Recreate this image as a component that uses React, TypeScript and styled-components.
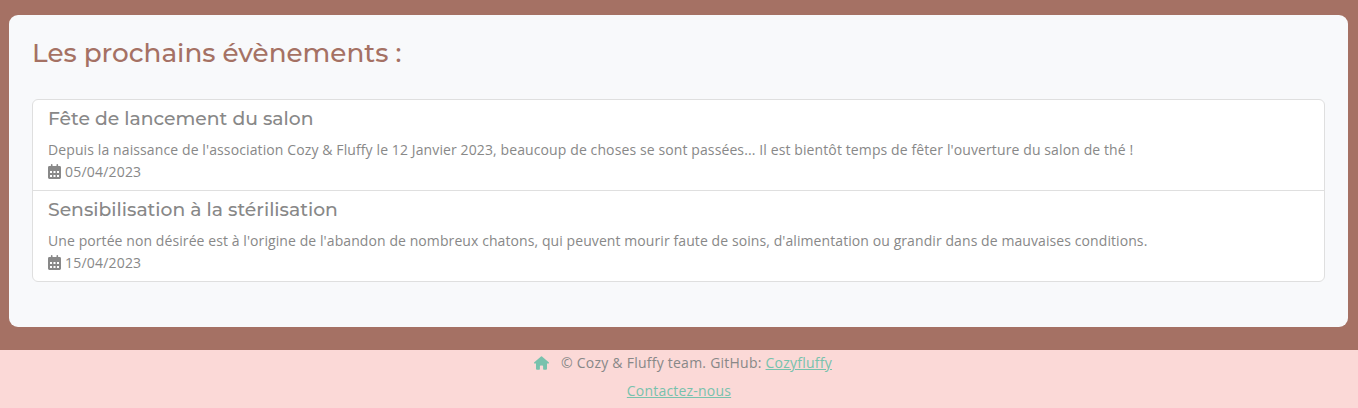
import React from 'react';
import styled, { createGlobalStyle } from 'styled-components';

const GlobalStyle = createGlobalStyle`
  * { box-sizing: border-box; }
  body {
    margin: 0;
    background: #a57164;
    color: #888;
    font-family: "Segoe UI", "Open Sans", "Noto Sans", sans-serif;
    font-size: 14px;
    line-height: 22px;
    overflow: hidden;
  }
`;

const Page = styled.div`
  display: flex;
  flex-direction: column;
  height: 408px;
`;

const Panel = styled.main`
  height: 312px;
  margin: 15px 10px 23px 9px;
  padding: 22px 23px;
  border-radius: 9px;
  background: #f8f9fb;
`;

const Title = styled.h1`
  margin: 0 0 29px;
  color: #a57164;
  font: 500 26.25px/33px Montserrat, sans-serif;
  white-space: nowrap;
`;

const EventList = styled.ul`
  list-style: none;
  margin: 0;
  padding: 0;
  border: 1px solid #dfdfdf;
  border-radius: 6px;
  background: #fff;
`;

const EventItem = styled.li`
  height: 90px;
  padding: 7px 15px;
  & + & {
    height: 91px;
    border-top: 1px solid #dfdfdf;
  }
`;

const EventName = styled.h2`
  margin: 0 0 9px;
  font: 500 18.75px/23px Montserrat, sans-serif;
`;

const Line = styled.div<{ $spacing?: number }>`
  display: flex;
  align-items: center;
  height: 22px;
  white-space: pre;
  letter-spacing: ${(p) => p.$spacing ?? 0.2}px;
`;

const CalendarSvg = styled.svg`
  width: 13px;
  height: 15px;
  margin: 0 4px 1px 0;
`;

const Footer = styled.footer`
  flex: 1;
  display: flex;
  flex-direction: column;
  align-items: center;
  gap: 6px;
  padding-top: 2px;
  background: #fbd9d7;
`;

const Credits = styled(Line)`
  padding-left: 8px;
`;

const HomeSvg = styled.svg`
  width: 15px;
  height: 14px;
  margin-right: 12px;
  color: #78c2ad;
`;

const Link = styled.a`
  color: #78c2ad;
  text-decoration: underline;
`;

function CalendarIcon() {
  return (
    <CalendarSvg viewBox="0 0 13 15" fill="currentColor" aria-hidden="true">
      <path
        fillRule="evenodd"
        d="M3.7 0a.8.8 0 0 1 .8.8V2h4V.8a.8.8 0 0 1 1.6 0V2h1.5A1.4 1.4 0 0 1 13 3.4v10.2a1.4 1.4 0 0 1-1.4 1.4H1.4A1.4 1.4 0 0 1 0 13.600V3.400A1.400 1.400 0 0 1 1.400 2H2.900V.8a.8.8 0 0 1 .8-.8ZM2 7v2h2V7ZM5.500 7v2h2V7ZM9 7v2h2V7ZM2 11v2h2v-2ZM5.500 11v2h2v-2ZM9 11v2h2v-2Z"
      />
    </CalendarSvg>
  );
}

function HomeIcon() {
  return (
    <HomeSvg viewBox="0 0 15 14" fill="currentColor" aria-hidden="true">
      <path d="M7 .4a.8.8 0 0 1 1 0l6.700 5.900c.6.500.3 1.300-.5 1.300H13v5.200a1 1 0 0 1-1 1H9.800a.7.7 0 0 1-.7-.7V10.300a.8.8 0 0 0-.8-.8H6.700a.8.8 0 0 0-.8.8v2.800a.7.7 0 0 1-.7.7H3a1 1 0 0 1-1-1V7.600H.8C0 7.600-.3 6.800.300 6.300Z" />
    </HomeSvg>
  );
}

const events = [
  {
    name: 'Fête de lancement du salon',
    text: "Depuis la naissance de l'association Cozy & Fluffy le 12 Janvier 2023, beaucoup de choses se sont passées... Il est bientôt temps de fêter l'ouverture du salon de thé !",
    date: '05/04/2023',
    spacing: 0.11,
  },
  {
    name: 'Sensibilisation à la stérilisation',
    text: "Une portée non désirée est à l'origine de l'abandon de nombreux chatons, qui peuvent mourir faute de soins, d'alimentation ou grandir dans de mauvaises conditions.",
    date: '15/04/2023',
    spacing: 0.085,
  },
];

export default function App() {
  return (
    <Page>
      <GlobalStyle />
      <Panel>
        <Title>Les prochains évènements :</Title>
        <EventList>
          {events.map((e) => (
            <EventItem key={e.name}>
              <EventName>{e.name}</EventName>
              <Line $spacing={e.spacing}>{e.text}</Line>
              <Line><CalendarIcon />{e.date}</Line>
            </EventItem>
          ))}
        </EventList>
      </Panel>
      <Footer>
        <Credits $spacing={0.24}>
          <HomeIcon />© Cozy & Fluffy team. GitHub: <Link href="#">Cozyfluffy</Link>
        </Credits>
        <Line><Link href="#">Contactez-nous</Link></Line>
      </Footer>
    </Page>
  );
}
